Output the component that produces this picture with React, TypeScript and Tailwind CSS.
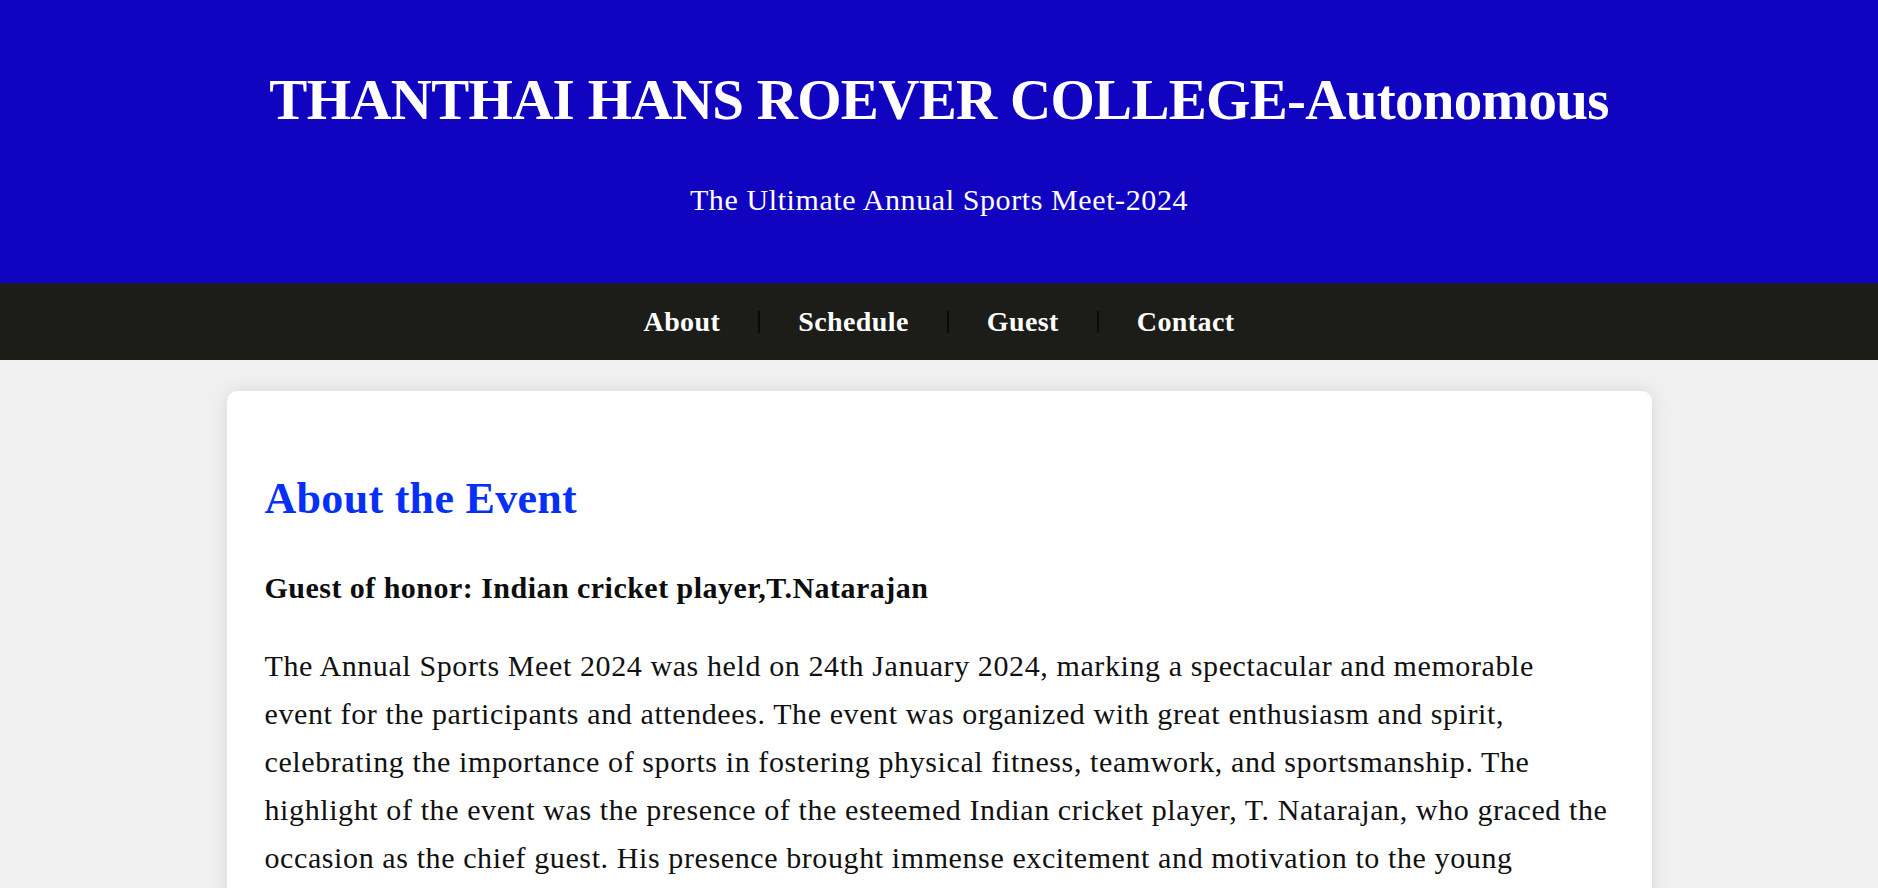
import React from "react";

const lines = [
  "The Annual Sports Meet 2024 was held on 24th January 2024, marking a spectacular and memorable",
  "event for the participants and attendees. The event was organized with great enthusiasm and spirit,",
  "celebrating the importance of sports in fostering physical fitness, teamwork, and sportsmanship. The",
  "highlight of the event was the presence of the esteemed Indian cricket player, T. Natarajan, who graced the",
  "occasion as the chief guest. His presence brought immense excitement and motivation to the young",
  "athletes, inspiring them to strive for excellence in their respective sports and to uphold the values",
  "of discipline and fair play.",
];

export default function App() {
  return (
    <div className="min-h-screen bg-[#f0f0f0] font-['Liberation_Serif',serif] pb-[40px]">
      <header className="h-[283px] bg-[#1004c1] pt-[64px] text-center text-white">
        <h1 className="text-[57px] leading-[72px] font-bold tracking-[-0.7px]">
          THANTHAI HANS ROEVER COLLEGE-Autonomous
        </h1>
        <p className="mt-[46px] text-[30px] leading-[36px] tracking-[0.6px]">
          The Ultimate Annual Sports Meet-2024
        </p>
      </header>

      <nav className="h-[77px] bg-[#1c1c18] flex items-center justify-center">
        <ul className="flex items-center gap-[38px] text-white text-[28px] leading-[34px] font-bold tracking-[0.4px]">
          <li>
            <a href="#about">About</a>
          </li>
          <li className="w-[2px] h-[22px] bg-[#0b0b0b]" aria-hidden="true" />
          <li>
            <a href="#schedule">Schedule</a>
          </li>
          <li className="w-[2px] h-[22px] bg-[#0b0b0b]" aria-hidden="true" />
          <li>
            <a href="#guest">Guest</a>
          </li>
          <li className="w-[2px] h-[22px] bg-[#0b0b0b]" aria-hidden="true" />
          <li>
            <a href="#contact">Contact</a>
          </li>
        </ul>
      </nav>

      <main
        id="about"
        className="mt-[31px] mx-auto w-[1425px] bg-white rounded-[10px] shadow-[0_0_18px_rgba(0,0,0,0.1)] px-[38px] pt-[81px] pb-[40px]"
      >
        <h2 className="text-[44px] leading-[53px] font-bold text-[#0630f7] tracking-[0.3px]">
          About the Event
        </h2>
        <h3 className="mt-[45px] text-[30px] leading-[36px] font-bold text-[#0d0d0d] tracking-[0.47px]">
          Guest of honor: Indian cricket player,T.Natarajan
        </h3>
        <p className="mt-[36px] text-[30px] leading-[48px] text-[#111111] tracking-[0.6px]">
          {lines.map((l, i) => (
            <React.Fragment key={i}>
              {l}
              {i < lines.length - 1 && <br />}
            </React.Fragment>
          ))}
        </p>
      </main>
    </div>
  );
}
